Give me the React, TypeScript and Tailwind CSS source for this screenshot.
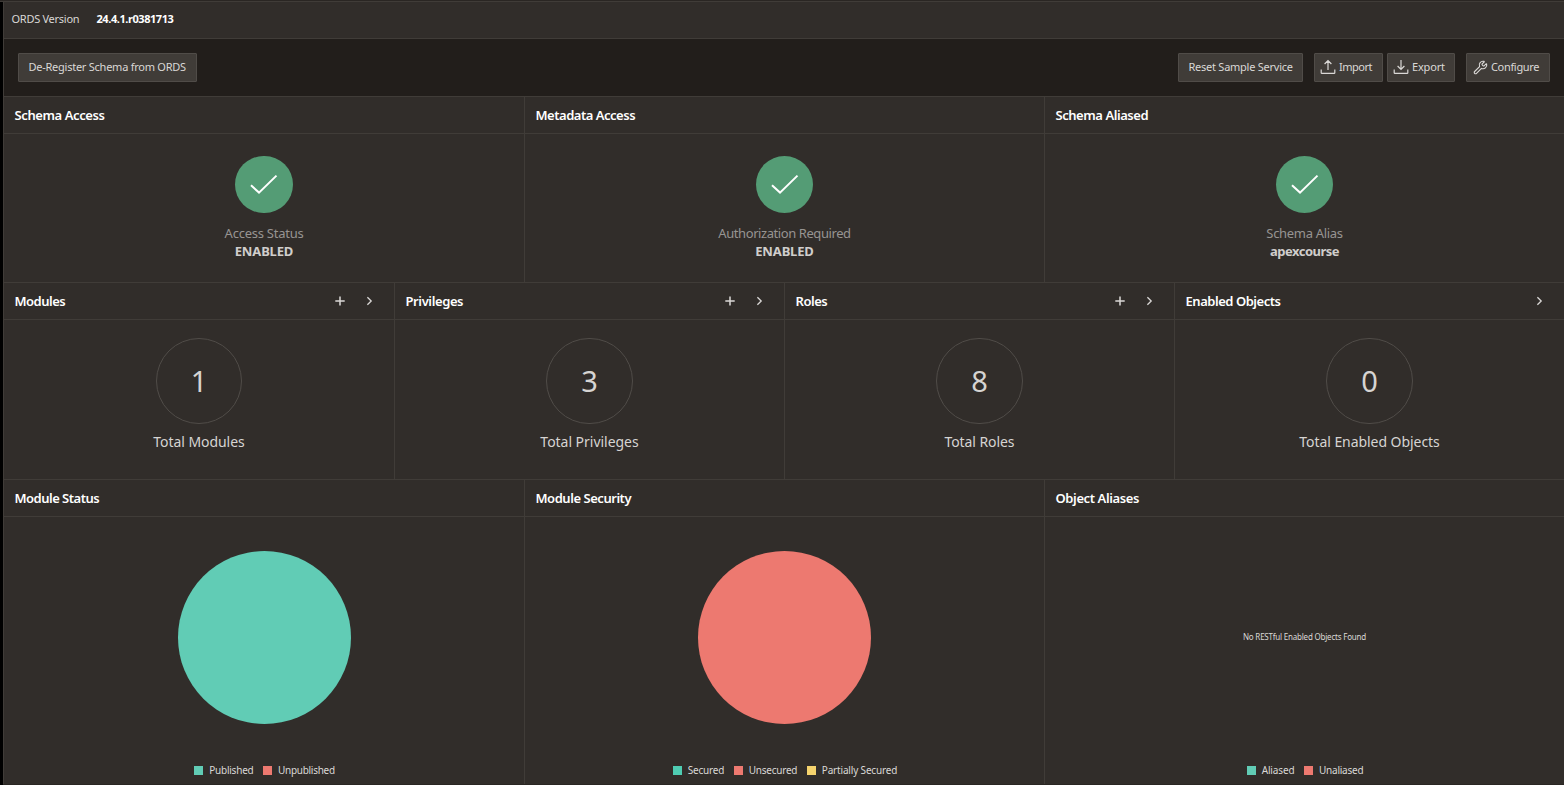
import type { ReactNode } from "react";
import { Wrench } from "lucide-react";

type Label = { text: string; track: string };

function UploadIcon() {
  return (
    <svg width="16" height="16" viewBox="0 0 16 16" fill="none" stroke="currentColor" strokeWidth="1.2" className="-mx-px -mt-0.5 shrink-0">
      <path d="M8 11V2M4.6 5 8 1.5 11.4 5M1.2 10.5V13.7Q1.2 14.4 1.9 14.4H14.1Q14.8 14.4 14.8 13.7V10.5" />
    </svg>
  );
}

function DownloadIcon() {
  return (
    <svg width="16" height="16" viewBox="0 0 16 16" fill="none" stroke="currentColor" strokeWidth="1.2" className="-mx-px -mt-0.5 shrink-0">
      <path d="M8 1V10.3M4.6 7 8 10.4 11.4 7M1.2 10.5V13.7Q1.2 14.4 1.9 14.4H14.1Q14.8 14.4 14.8 13.7V10.5" />
    </svg>
  );
}

function Button({ icon, label, width }: { icon?: ReactNode; label: Label; width: string }) {
  return (
    <button
      className={`flex h-[29px] items-center rounded-[1px] border border-[#504c48] bg-[#403c38] text-[11px] leading-none text-[#dad8d6] ${width} ${icon ? "gap-1 pl-[6px]" : "pl-[9.5px]"}`}
    >
      {icon}
      <span className={`-mt-px whitespace-nowrap leading-4 ${label.track}`}>{label.text}</span>
    </button>
  );
}

function Panel({ title, actions, children }: { title: Label; actions?: ReactNode; children: ReactNode }) {
  return (
    <section className="flex min-w-0 flex-col border-l border-[#403c38]">
      <header className="flex h-[37px] shrink-0 items-center justify-between border-b border-[#403c38] pl-[10.5px] pr-[19px]">
        <h2 className={`whitespace-nowrap text-[13px] font-semibold leading-[18px] text-white ${title.track}`}>{title.text}</h2>
        {actions}
      </header>
      {children}
    </section>
  );
}

function PanelActions({ add }: { add: boolean }) {
  return (
    <div className="flex items-center gap-[19px] text-[#dad8d6]">
      {add && (
        <svg width="10" height="10" viewBox="0 0 10 10" fill="none" stroke="currentColor" strokeWidth="1.5">
          <path d="M5 .5V9.5M.3 5H9.7" />
        </svg>
      )}
      <svg width="11" height="10" viewBox="0 0 11 10" fill="none" stroke="currentColor" strokeWidth="1.3">
        <path d="M3.4 1.2 7.2 5 3.4 8.8" />
      </svg>
    </div>
  );
}

const statuses = [
  { title: { text: "Schema Access", track: "tracking-[-0.4px]" }, label: { text: "Access Status", track: "tracking-[-0.25px]" }, value: { text: "ENABLED", track: "tracking-[-0.15px]" } },
  { title: { text: "Metadata Access", track: "tracking-[-0.48px]" }, label: { text: "Authorization Required", track: "tracking-[-0.425px]" }, value: { text: "ENABLED", track: "tracking-[-0.15px]" } },
  { title: { text: "Schema Aliased", track: "tracking-[-0.45px]" }, label: { text: "Schema Alias", track: "tracking-[-0.32px]" }, value: { text: "apexcourse", track: "tracking-[-0.49px]" } },
];

const totals = [
  { title: { text: "Modules", track: "tracking-[-0.5px]" }, count: 1, label: { text: "Total Modules", track: "tracking-[-0.06px]" }, add: true },
  { title: { text: "Privileges", track: "tracking-[-0.39px]" }, count: 3, label: { text: "Total Privileges", track: "tracking-[-0.03px]" }, add: true },
  { title: { text: "Roles", track: "tracking-[-0.46px]" }, count: 8, label: { text: "Total Roles", track: "tracking-[-0.075px]" }, add: true },
  { title: { text: "Enabled Objects", track: "tracking-[-0.46px]" }, count: 0, label: { text: "Total Enabled Objects", track: "tracking-[-0.06px]" }, add: false },
];

const charts = [
  {
    title: { text: "Module Status", track: "tracking-[-0.51px]" },
    pie: "text-[#61ccb5]",
    legend: [
      { text: "Published", track: "tracking-[-0.22px]", color: "bg-[#61ccb5]" },
      { text: "Unpublished", track: "tracking-[-0.28px]", color: "bg-[#ed7970]" },
    ],
  },
  {
    title: { text: "Module Security", track: "tracking-[-0.46px]" },
    pie: "text-[#ed7970]",
    legend: [
      { text: "Secured", track: "tracking-[-0.19px]", color: "bg-[#4fccb2]" },
      { text: "Unsecured", track: "tracking-[-0.236px]", color: "bg-[#ed7970]" },
      { text: "Partially Secured", track: "tracking-[-0.164px]", color: "bg-[#f5d36d]" },
    ],
  },
  {
    title: { text: "Object Aliases", track: "tracking-[-0.39px]" },
    pie: null,
    legend: [
      { text: "Aliased", track: "tracking-[-0.13px]", color: "bg-[#61ccb5]" },
      { text: "Unaliased", track: "tracking-[-0.23px]", color: "bg-[#ed7970]" },
    ],
  },
];

export default function App() {
  return (
    <div className="flex h-[785px] w-[1564px] flex-col overflow-hidden bg-black font-['Noto_Sans',sans-serif]">
      <div className="h-[2px] shrink-0 border-b border-[#403c38] bg-[#2a2623]" />
      <main className="ml-[3px] flex min-h-0 flex-1 flex-col bg-[#312d2a]">
        <div className="flex h-[37px] shrink-0 items-center border-b border-l border-[#403c38] pb-[2px] pl-[7.5px] text-[11px] leading-4">
          <span className="w-[85px] whitespace-nowrap tracking-[-0.27px] text-[#dad8d6]">ORDS Version</span>
          <span className="whitespace-nowrap font-bold tracking-[-0.43px] text-white">24.4.1.r0381713</span>
        </div>

        <div className="flex h-[58px] shrink-0 items-center justify-between border-b border-l border-[#403c38] bg-[#221e1b] pl-[14px] pr-[14px]">
          <Button width="w-[179px]" label={{ text: "De-Register Schema from ORDS", track: "tracking-[-0.25px]" }} />
          <div className="flex">
            <Button width="w-[125px]" label={{ text: "Reset Sample Service", track: "tracking-[-0.25px]" }} />
            <div className="mx-[11px] flex gap-1">
              <Button width="w-[69px]" icon={<UploadIcon />} label={{ text: "Import", track: "tracking-[-0.5px]" }} />
              <Button width="w-[68px]" icon={<DownloadIcon />} label={{ text: "Export", track: "tracking-[-0.18px]" }} />
            </div>
            <Button width="w-[84px]" icon={<Wrench size={15} strokeWidth={1.8} className="-ml-[0.5px] -mr-[0.5px] -mt-px shrink-0" />} label={{ text: "Configure", track: "tracking-[-0.33px]" }} />
          </div>
        </div>

        <div className="grid h-[186px] shrink-0 grid-cols-[521px_520px_520px] border-b border-[#403c38]">
          {statuses.map((s) => (
            <Panel key={s.title.text} title={s.title}>
              <div className="flex flex-col items-center pt-[22px] text-[13px] leading-[18px]">
                <div className="flex h-[57px] w-[57.4px] items-center justify-center rounded-full bg-[#549c75]">
                  <svg width="57" height="57" viewBox="0 0 57 57" fill="none" className="shrink-0">
                    <path d="M16 29.3 24 36.6 41.5 19.6" stroke="#fff" strokeWidth="2" />
                  </svg>
                </div>
                <span className={`mt-[11px] text-[#979492] ${s.label.track}`}>{s.label.text}</span>
                <span className={`font-bold text-[#d0cecc] ${s.value.track}`}>{s.value.text}</span>
              </div>
            </Panel>
          ))}
        </div>

        <div className="grid h-[197px] shrink-0 grid-cols-[391px_390px_390px_390px] border-b border-[#403c38]">
          {totals.map((t) => (
            <Panel key={t.title.text} title={t.title} actions={<PanelActions add={t.add} />}>
              <div className="flex flex-col items-center pt-[18px] text-[#d6d4d2]">
                <div className="flex h-[86px] w-[86.4px] items-center justify-center rounded-full border border-[#504c48] text-[29px] leading-10">{t.count}</div>
                <span className={`mt-[8px] text-[14px] leading-5 ${t.label.track}`}>{t.label.text}</span>
              </div>
            </Panel>
          ))}
        </div>

        <div className="grid min-h-0 flex-1 grid-cols-[521px_520px_520px] border-b border-[#2a2623]">
          {charts.map((c) => (
            <Panel key={c.title.text} title={c.title}>
              <div className="flex h-[241px] items-center justify-center">
                {c.pie ? (
                  <svg width="173" height="173" viewBox="0 0 173 173" className={c.pie}>
                    <circle cx="86.5" cy="86.5" r="86.5" fill="currentColor" />
                  </svg>
                ) : (
                  <span className="pb-px text-[8px] leading-3 tracking-[-0.208px] text-[#dad8d6]">No RESTful Enabled Objects Found</span>
                )}
              </div>
              <div className="mt-[5px] flex justify-center gap-[9.5px] pl-px text-[10px] leading-[14px] text-[#dad8d6]">
                {c.legend.map((item) => (
                  <div key={item.text} className="flex items-center gap-[6px]">
                    <span className={`size-[9px] ${item.color}`} />
                    <span className={`whitespace-nowrap ${item.track}`}>{item.text}</span>
                  </div>
                ))}
              </div>
            </Panel>
          ))}
        </div>
      </main>
    </div>
  );
}
